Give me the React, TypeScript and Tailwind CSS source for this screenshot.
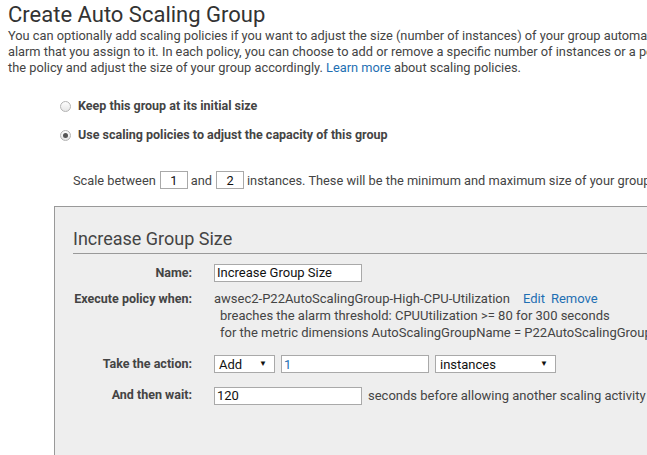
import { useState } from 'react'

function Radio({ checked }: { checked: boolean }) {
  return (
    <span className="flex h-[11px] w-[11px] items-center justify-center rounded-full border border-[#b3b3b3] bg-gradient-to-b from-[#fdfdfd] to-[#e6e6e6]">
      {checked && <span className="h-[5px] w-[5px] rounded-full bg-[#555]" />}
    </span>
  )
}

function Select({ value, width }: { value: string; width: string }) {
  return (
    <div
      className={`flex h-[18px] items-center justify-between border border-[#a9a9a9] bg-white pr-[7px] pl-[4px] text-[13px] text-[#111] ${width}`}
    >
      <span>{value}</span>
      <span className="text-[8px]">▼</span>
    </div>
  )
}

function Row({ label, children }: { label: string; children: React.ReactNode }) {
  return (
    <div className="flex">
      <div className="w-[141px] shrink-0 pr-[22px] text-right text-[12.5px] font-bold text-[#444]">
        {label}
      </div>
      <div className="flex-1">{children}</div>
    </div>
  )
}

export default function App() {
  const [policy] = useState<'keep' | 'scale'>('scale')

  return (
    <div className="h-[455px] w-[647px] overflow-hidden bg-white font-['Roboto',sans-serif] text-[#444]">
      <div className="w-[900px] pl-2">
        <h1 className="pt-[2px] text-[22px] leading-[26px] font-normal text-[#333]">
          Create Auto Scaling Group
        </h1>
        <div className="text-[12.8px] leading-[16px] whitespace-nowrap">
          <p>
            You can optionally add scaling policies if you want to adjust the size (number of
            instances) of your group automatically in response to changes in an
          </p>
          <p>
            alarm that you assign to it. In each policy, you can choose to add or remove a specific
            number of instances or a percentage of the existing group size
          </p>
          <p>
            the policy and adjust the size of your group accordingly.{' '}
            <a className="text-[#1f6fb3]">Learn more</a> about scaling policies.
          </p>
        </div>

        <div className="mt-[21px] flex flex-col gap-[10px] pl-[52px] text-[12.5px] font-bold">
          <label className="flex items-center gap-[7px]">
            <Radio checked={policy === 'keep'} />
            <span>Keep this group at its initial size</span>
          </label>
          <label className="flex items-center gap-[7px]">
            <Radio checked={policy === 'scale'} />
            <span>Use scaling policies to adjust the capacity of this group</span>
          </label>
        </div>

        <div className="mt-[26px] flex items-center pl-[65px] text-[12.8px]">
          <span>Scale between</span>
          <span className="mr-[3px] ml-[4px] flex h-[18px] w-[28px] items-center justify-center border border-[#a9a9a9] text-[#111]">
            1
          </span>
          <span>and</span>
          <span className="mr-[3px] ml-[4px] flex h-[18px] w-[28px] items-center justify-center border border-[#a9a9a9] text-[#111]">
            2
          </span>
          <span>instances. These will be the minimum and maximum size of your group.</span>
        </div>

        <div className="mt-[16px] ml-[46px] h-[260px] border border-[#999] bg-[#eeeeee] pt-[21px] pl-[18px]">
          <h2 className="border-b border-[#999] pb-[3px] text-[18px] leading-[22px] text-[#444]">
            Increase Group Size
          </h2>
          <div className="mt-[10px] flex flex-col text-[13px]">
            <Row label="Name:">
              <div className="flex h-[18px] w-[148px] items-center border border-[#a9a9a9] bg-white pl-[2px] text-[#111]">
                Increase Group Size
              </div>
            </Row>
            <div className="mt-[8px]">
              <Row label="Execute policy when:">
                <div className="leading-[17px]">
                  <div>
                    awsec2-P22AutoScalingGroup-High-CPU-Utilization
                    <a className="ml-[13px] text-[#1f6fb3]">Edit</a>
                    <a className="ml-[6px] text-[#1f6fb3]">Remove</a>
                  </div>
                  <div className="pl-[6px]">
                    breaches the alarm threshold: CPUUtilization &gt;= 80 for 300 seconds
                  </div>
                  <div className="pl-[6px]">
                    for the metric dimensions AutoScalingGroupName = P22AutoScalingGroup
                  </div>
                </div>
              </Row>
            </div>
            <div className="mt-[14px]">
              <Row label="Take the action:">
                <div className="flex items-center gap-[6px]">
                  <Select value="Add" width="w-[61px]" />
                  <div className="flex h-[18px] w-[148px] items-center border border-[#a9a9a9] bg-white pl-[2px] text-[#1f6fb3]">
                    1
                  </div>
                  <Select value="instances" width="w-[121px]" />
                </div>
              </Row>
            </div>
            <div className="mt-[12px]">
              <Row label="And then wait:">
                <div className="flex items-center gap-[6px]">
                  <div className="flex h-[18px] w-[148px] items-center border border-[#a9a9a9] bg-white pl-[2px] text-[#111]">
                    120
                  </div>
                  <span>seconds before allowing another scaling activity</span>
                </div>
              </Row>
            </div>
          </div>
        </div>
      </div>
    </div>
  )
}
